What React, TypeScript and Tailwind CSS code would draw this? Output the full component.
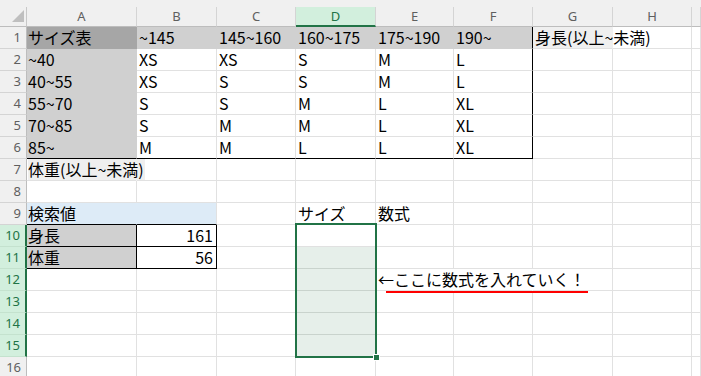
import React from "react";

type C = {
  t?: string;
  bg?: string;
  br?: string;
  bb?: string;
  right?: boolean;
  hl?: boolean;
};

const W = [
  "w-[110px]",
  "w-[80px]",
  "w-[79px]",
  "w-[80px]",
  "w-[78px]",
  "w-[79px]",
  "w-[80px]",
  "w-[79px]",
  "flex-1",
];
const LETTERS = ["A", "B", "C", "D", "E", "F", "G", "H", ""];

const GRAY = "bg-[#d0d0d0]";
const GRAYR = "border-r-[#d0d0d0]";
const GRAYB = "border-b-[#d0d0d0]";
const BLUE = "bg-[#ddebf7]";

function buildRows(): C[][] {
  const rows: C[][] = [];
  for (let r = 1; r <= 16; r++) {
    const row: C[] = [];
    for (let c = 0; c < 9; c++) row.push({});
    rows.push(row);
  }
  rows[0][0] = { t: "サイズ表", bg: "bg-[#a6a6a6]", br: "border-r-[#a6a6a6]", bb: "border-b-[#a6a6a6]" };
  const hdr = ["~145", "145~160", "160~175", "175~190", "190~"];
  hdr.forEach((t, i) => {
    rows[0][i + 1] = { t, bg: GRAY, br: i === 4 ? "border-r-black" : GRAYR, bb: GRAYB };
  });
  rows[0][6] = { t: "身長(以上~未満)", bg: "bg-[#efefef]", br: "border-r-transparent" };
  const data = [
    ["~40", "XS", "XS", "S", "M", "L"],
    ["40~55", "XS", "S", "S", "M", "L"],
    ["55~70", "S", "S", "M", "L", "XL"],
    ["70~85", "S", "M", "M", "L", "XL"],
    ["85~", "M", "M", "L", "L", "XL"],
  ];
  data.forEach((d, ri) => {
    const last = ri === 4;
    d.forEach((t, ci) => {
      if (ci === 0) {
        rows[ri + 1][0] = { t, bg: GRAY, br: GRAYR, bb: last ? "border-b-black" : GRAYB };
      } else {
        rows[ri + 1][ci] = {
          t,
          br: ci === 5 ? "border-r-black" : undefined,
          bb: last ? "border-b-black" : undefined,
        };
      }
    });
  });
  rows[6][0] = { t: "体重(以上~未満)", hl: true, br: "border-r-transparent" };
  rows[8][0] = { t: "検索値", bg: BLUE, br: "border-r-[#ddebf7]", bb: "border-b-black" };
  rows[8][1] = { bg: BLUE, bb: "border-b-black" };
  rows[8][3] = { t: "サイズ" };
  rows[8][4] = { t: "数式" };
  rows[9][0] = { t: "身長", bg: GRAY, br: "border-r-black", bb: "border-b-black" };
  rows[9][1] = { t: "161", right: true, br: "border-r-black", bb: "border-b-black" };
  rows[10][0] = { t: "体重", bg: GRAY, br: "border-r-black", bb: "border-b-black" };
  rows[10][1] = { t: "56", right: true, br: "border-r-black", bb: "border-b-black" };
  for (let r = 10; r <= 14; r++) {
    rows[r][3] = { bg: "bg-[#e6efea]", bb: "border-b-[#c9d3cd]" };
  }
  rows[11][4] = { t: "←ここに数式を入れていく！", br: "border-r-transparent" };
  rows[11][5] = { br: "border-r-transparent" };
  return rows;
}

export default function App() {
  const rows = buildRows();
  return (
    <div className="relative w-[701px] h-[376px] overflow-hidden bg-white font-['Noto_Sans_CJK_JP',sans-serif] text-black">
      <div className="h-[7px] bg-[#f0f0f0]" />
      <div className="flex h-[20px] bg-[#f0f0f0] font-['Noto_Sans',sans-serif] text-[13px] text-[#5f5f5f]">
        <div className="relative w-[27px] shrink-0 border-r border-b border-r-[#c8c8c8] border-b-[#bdbdbd]">
          <svg width="27" height="20" className="block">
            <polygon points="12,15 24,15 24,3" fill="#bfbfbf" />
          </svg>
        </div>
        {LETTERS.map((l, i) =>
          i === 3 ? (
            <div
              key={i}
              className={`${W[i]} shrink-0 flex items-center justify-center bg-[#d2efdd] text-[#217346] border-r border-r-[#d4d4d4] border-b-2 border-b-[#217346] leading-none`}
            >
              {l}
            </div>
          ) : (
            <div
              key={i}
              className={`${W[i]} shrink-0 flex items-center justify-center border-r border-b border-r-[#d4d4d4] border-b-[#bdbdbd] leading-none`}
            >
              {l}
            </div>
          )
        )}
      </div>
      {rows.map((row, ri) => {
        const n = ri + 1;
        const active = n >= 10 && n <= 15;
        return (
          <div key={n} className="flex h-[22px]">
            <div
              className={
                active
                  ? "w-[27px] shrink-0 flex items-center justify-end pr-[5px] bg-[#d2efdd] text-[#217346] border-r-2 border-b border-r-[#217346] border-b-[#c4e2ce] font-['Noto_Sans',sans-serif] text-[13px] leading-none"
                  : "w-[27px] shrink-0 flex items-center justify-end pr-[5px] bg-[#f0f0f0] text-[#5f5f5f] border-r border-b border-r-[#bdbdbd] border-b-[#d4d4d4] font-['Noto_Sans',sans-serif] text-[13px] leading-none"
              }
            >
              {n}
            </div>
            {row.map((c, ci) => (
              <div
                key={ci}
                className={`${W[ci]} shrink-0 flex items-center whitespace-nowrap text-[16px] leading-[21px] border-r border-b ${c.br ?? "border-r-[#e1e1e1]"} ${c.bb ?? "border-b-[#e1e1e1]"} ${c.bg ?? ""} ${c.right ? "justify-end pr-[3px]" : ci === 0 ? "pl-[1px]" : "pl-[2px]"}`}
              >
                {c.hl ? (
                  <span className="bg-[#efefef] leading-[21px] pr-[1px]">{c.t}</span>
                ) : (
                  c.t
                )}
              </div>
            ))}
          </div>
        );
      })}
      <div className="absolute left-[295px] top-[223px] w-[82px] h-[135px] border-2 border-[#217346]" />
      <div className="absolute left-[373px] top-[354px] w-[7px] h-[7px] bg-[#217346] border border-white" />
      <div className="absolute left-[386px] top-[291px] w-[202px] h-[2px] bg-[#ff0000]" />
    </div>
  );
}
